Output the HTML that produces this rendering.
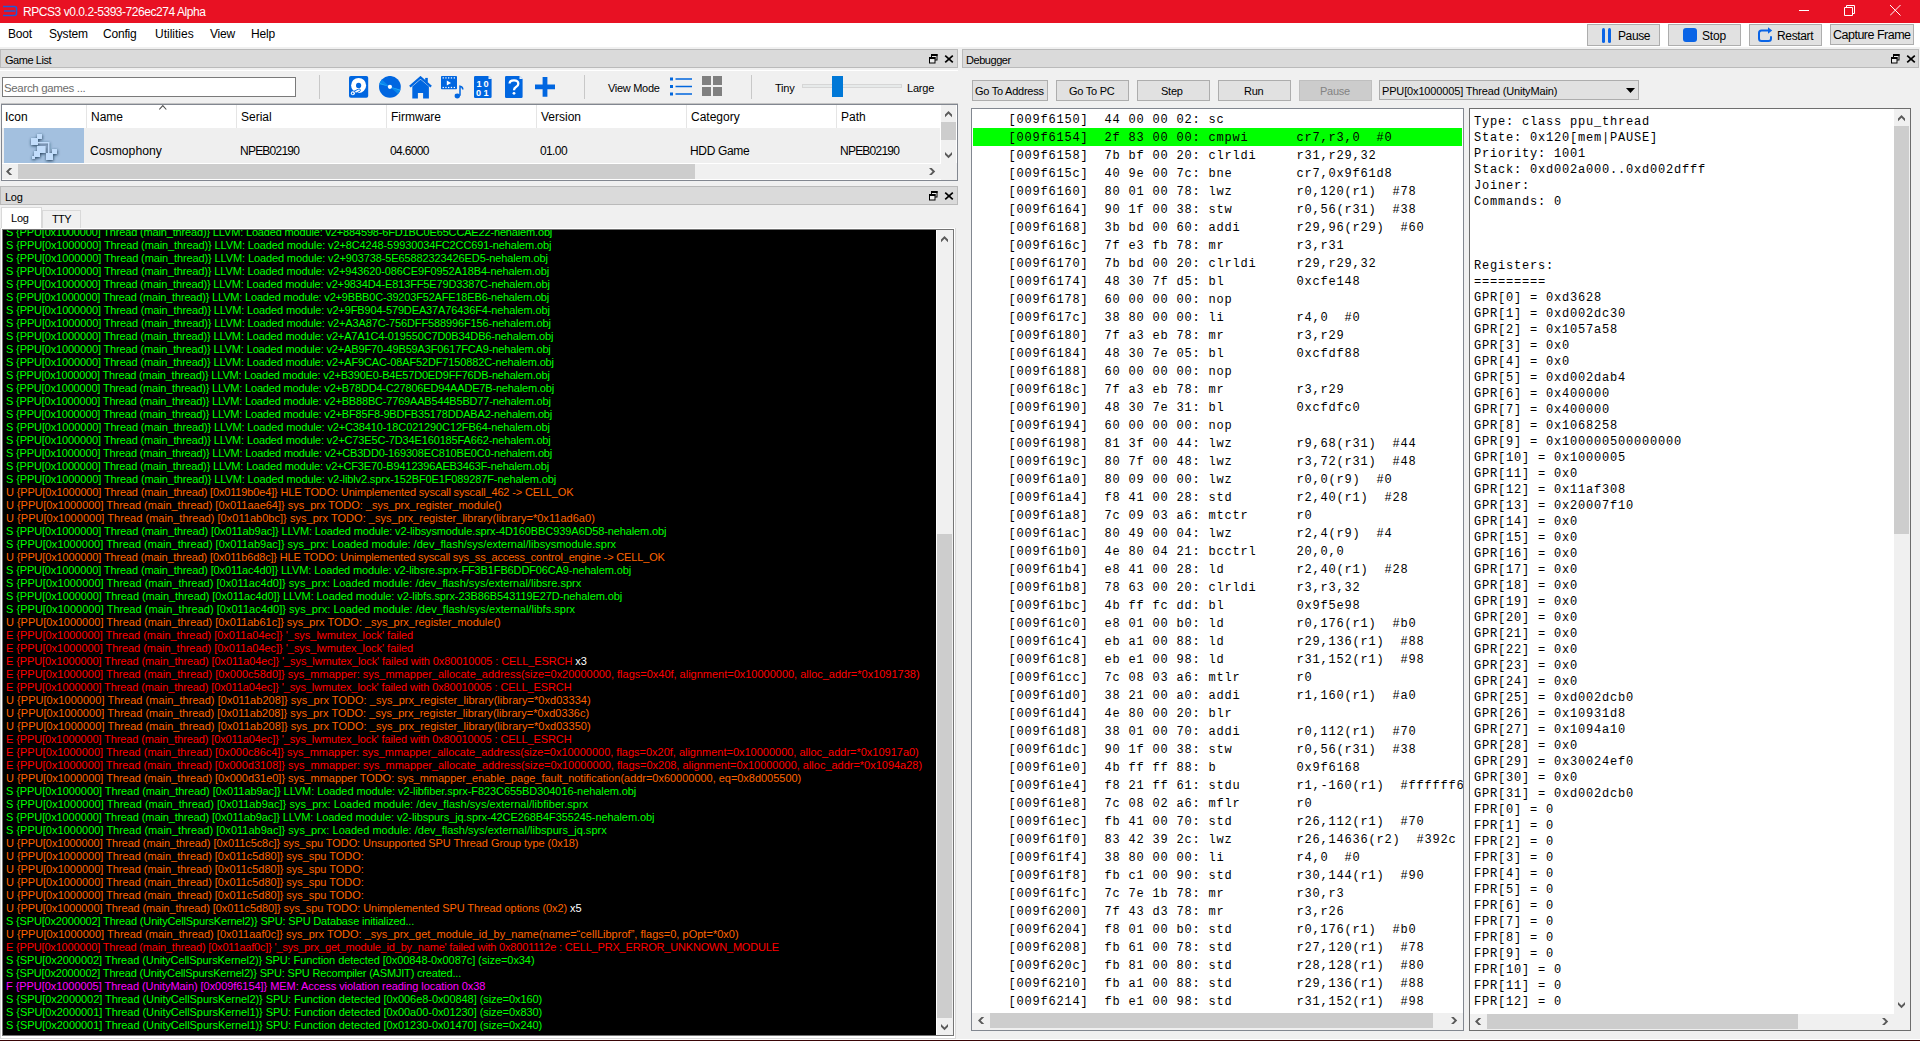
<!DOCTYPE html>
<html><head><meta charset="utf-8">
<style>
*{box-sizing:border-box;margin:0;padding:0}
html,body{width:1920px;height:1041px;overflow:hidden;background:#f0f0f0;font-family:"Liberation Sans",sans-serif;font-size:12px;color:#000}
.a{position:absolute}
.t{position:absolute;white-space:pre;line-height:1}
#title{left:0;top:0;width:1920px;height:23px;background:#e81123}
#menubar{left:0;top:23px;width:1920px;height:24px;background:#fff}
.btn{position:absolute;background:#e1e1e1;border:1px solid #adadad}
.dtitle{position:absolute;background:#dadada;border:1px solid #bababa}
.frame{position:absolute;border:1px solid #828790;background:#fff}
.mono{font-family:"Liberation Mono",monospace}
#log .l{position:absolute;left:6px;white-space:pre;font-size:11px;line-height:13px;letter-spacing:-0.125px}
.G{color:#00ff00}.U{color:#ff6400}.E{color:#ff0000}.F{color:#ff00ff}.W{color:#fff}
.dl{position:absolute;left:36.5px;white-space:pre;font-family:"Liberation Mono",monospace;font-size:12px;letter-spacing:0.8px;line-height:18px}
#reg{position:absolute;left:4px;top:5px;white-space:pre;font-family:"Liberation Mono",monospace;font-size:12px;letter-spacing:0.8px;line-height:16px}
</style></head><body>
<!-- TITLE BAR -->
<div id="title" class="a">
  <svg class="a" style="left:2px;top:4px" width="16" height="14" viewBox="0 0 16 14">
    <path d="M1 2.5H12.5Q14.5 2.5 14.5 4.5V9.5Q14.5 11.5 12.5 11.5H1M2 7H13" stroke="#1e5bd8" stroke-width="1.6" fill="none"/>
  </svg>
  <div class="t" style="left:23px;top:6px;font-size:12px;color:#fff;letter-spacing:-0.45px">RPCS3 v0.0.2-5393-726ec274 Alpha</div>
  <div class="a" style="left:1799px;top:10px;width:10px;height:1px;background:#fff"></div>
  <svg class="a" style="left:1844px;top:5px" width="11" height="11" viewBox="0 0 11 11"><path d="M0.5 2.5H8.5V10.5H0.5ZM2.5 2.5V0.5H10.5V8.5H8.5" stroke="#fff" fill="none"/></svg>
  <svg class="a" style="left:1890px;top:5px" width="11" height="11" viewBox="0 0 11 11"><path d="M0 0L10.5 10.5M10.5 0L0 10.5" stroke="#fff" fill="none"/></svg>
</div>
<!-- MENU BAR -->
<div id="menubar" class="a">
  <div class="t" style="left:8px;top:5px;letter-spacing:-0.2px">Boot</div>
  <div class="t" style="left:49px;top:5px;letter-spacing:-0.2px">System</div>
  <div class="t" style="left:103px;top:5px;letter-spacing:-0.2px">Config</div>
  <div class="t" style="left:155px;top:5px;letter-spacing:0px">Utilities</div>
  <div class="t" style="left:210px;top:5px;letter-spacing:-0.2px">View</div>
  <div class="t" style="left:251px;top:5px;letter-spacing:-0.2px">Help</div>
</div>
<!-- toolbar buttons on menubar -->
<div class="btn" style="left:1587px;top:24px;width:73px;height:22px">
  <div class="a" style="left:14px;top:3px;width:3px;height:15px;background:#0a64e6;border-radius:1.5px"></div>
  <div class="a" style="left:20px;top:3px;width:3px;height:15px;background:#0a64e6;border-radius:1.5px"></div>
  <div class="t" style="left:30px;top:5px;letter-spacing:-0.4px">Pause</div>
</div>
<div class="btn" style="left:1668px;top:24px;width:73px;height:22px">
  <div class="a" style="left:14px;top:3px;width:14px;height:14px;background:#0a64e6;border-radius:3px"></div>
  <div class="t" style="left:33px;top:5px;letter-spacing:-0.2px">Stop</div>
</div>
<div class="btn" style="left:1749px;top:24px;width:73px;height:22px">
  <svg class="a" style="left:8px;top:2px" width="16" height="16" viewBox="0 0 16 16"><path d="M10.5 3.5H3.5Q1 3.5 1 6V11.5Q1 14 3.5 14H10.5Q13 14 13 11.5V10" stroke="#0a64e6" stroke-width="2" fill="none" stroke-linecap="round"/><path d="M10 0.2L14.2 3.5L10 6.8Z" fill="#0a64e6"/></svg>
  <div class="t" style="left:27px;top:5px;letter-spacing:-0.35px">Restart</div>
</div>
<div class="btn" style="left:1830px;top:24px;width:84px;height:21px">
  <div class="t" style="left:2px;top:4px;font-size:12.5px;letter-spacing:-0.5px">Capture Frame</div>
</div>

<!-- GAME LIST DOCK -->
<div class="dtitle" style="left:0px;top:49px;width:958px;height:19px">
  <div class="t" style="left:4px;top:5px;font-size:11px;letter-spacing:-0.45px">Game List</div>
  <svg class="a" style="left:928px;top:4px" width="9" height="10" viewBox="0 0 9 10"><rect x="2.5" y="0.5" width="5.5" height="5.5" fill="#ececec" stroke="#000"/><rect x="2" y="0" width="6.5" height="2" fill="#000"/><rect x="0.5" y="3.5" width="5.5" height="5.5" fill="#ececec" stroke="#000"/><rect x="0" y="3" width="6.5" height="2" fill="#000"/></svg>
  <svg class="a" style="left:942.5px;top:4px" width="10" height="10" viewBox="0 0 10 10"><path d="M1.2 1.6L8.8 8.4M8.8 1.6L1.2 8.4" stroke="#000" stroke-width="1.7" fill="none"/></svg>
</div>
<div class="a" style="left:0;top:70px;width:958px;height:1px;background:#fff"></div>
<!-- search box -->
<div class="a" style="left:2px;top:77px;width:294px;height:20px;background:#fff;border:1px solid #7a7a7a">
  <div class="t" style="left:1px;top:5px;font-size:11.5px;color:#6d6d6d;letter-spacing:-0.35px">Search games ...</div>
</div>
<div class="a" style="left:319px;top:75px;width:1px;height:24px;background:#c8c8c8"></div>
<!-- icons -->
<svg class="a" style="left:349px;top:76px" width="20" height="22" viewBox="0 0 20 22">
  <rect x="0" y="0" width="19.2" height="21.8" rx="1.8" fill="#0066e0"/>
  <circle cx="9.6" cy="9.4" r="7.5" fill="#fff"/>
  <circle cx="9.6" cy="9.4" r="2.6" fill="#0066e0"/>
  <path d="M3.8 17.3L10 14.3" stroke="#0066e0" stroke-width="3.4" stroke-linecap="round"/>
  <path d="M3.8 17.3L10 14.3" stroke="#fff" stroke-width="1.8" stroke-linecap="round"/>
  <circle cx="3.9" cy="17.3" r="2.9" fill="#0066e0"/>
  <circle cx="3.9" cy="17.3" r="2.0" fill="#fff"/>
  <circle cx="3.7" cy="17.4" r="0.85" fill="#0066e0"/>
</svg>
<svg class="a" style="left:379px;top:76px" width="22" height="22" viewBox="0 0 22 22">
  <circle cx="10.9" cy="10.85" r="10.9" fill="#0066e0"/>
  <path d="M10.9 10.85L2.8 3.6A10.9 10.9 0 0 0 0.3 8.3Z" fill="#0a86ec"/>
  <path d="M10.9 10.85L1.0 7.0L0.5 8.0Z" fill="#20aaf6"/>
  <path d="M10.9 10.85L19 18.1A10.9 10.9 0 0 0 21.5 13.4Z" fill="#0a86ec"/>
  <path d="M10.9 10.85L20.8 14.7L21.3 13.7Z" fill="#20aaf6"/>
  <circle cx="10.9" cy="10.85" r="2.1" fill="#fff"/>
</svg>
<svg class="a" style="left:409px;top:76px" width="24" height="23" viewBox="0 0 24 23">
  <path d="M0.9 10.6L11.5 1.4L22.1 10.6" stroke="#0066e0" stroke-width="2.3" fill="none"/>
  <path d="M3.3 10.4L11.5 3.6L19.9 10.4V22.5H14.1V17.1H8.9V22.5H3.3Z" fill="#0066e0"/>
  <rect x="16.2" y="1.9" width="2.6" height="4.2" fill="#0066e0"/>
</svg>
<svg class="a" style="left:441px;top:76px" width="23" height="23" viewBox="0 0 23 23">
  <rect x="0" y="0.1" width="16" height="13.1" rx="0.8" fill="#0066e0"/>
  <g fill="#fff"><rect x="1.6" y="1.3" width="1.3" height="1.2"/><rect x="4.3" y="1.3" width="1.3" height="1.2"/><rect x="7" y="1.3" width="1.3" height="1.2"/><rect x="9.8" y="1.3" width="1.3" height="1.2"/><rect x="12.7" y="1.3" width="1.3" height="1.2"/>
  <rect x="1.6" y="10.9" width="1.3" height="1.2"/><rect x="4.3" y="10.9" width="1.3" height="1.2"/><rect x="7" y="10.9" width="1.3" height="1.2"/><rect x="9.8" y="10.9" width="1.3" height="1.2"/><rect x="12.7" y="10.9" width="1.3" height="1.2"/></g>
  <path d="M5.8 4.4V9.5L10 6.95Z" fill="#fff"/>
  <path d="M19 19.8V10.2Q21.8 10.8 21.8 13.4" stroke="#0066e0" stroke-width="1.5" fill="none"/>
  <ellipse cx="16.3" cy="20" rx="2.7" ry="2.4" fill="#0066e0"/>
</svg>
<svg class="a" style="left:474px;top:76px" width="19" height="22" viewBox="0 0 19 22">
  <path d="M1.2 0H14.5L17.6 3.1V20.8Q17.6 22 16.4 22H1.2Q0 22 0 20.8V1.2Q0 0 1.2 0Z" fill="#0066e0"/>
  <path d="M14.5 0L17.6 3.1H14.5Z" fill="#fff" opacity="0.9"/>
  <g font-family="Liberation Sans" font-size="9.2" font-weight="bold" fill="#fff">
  <text x="2.6" y="10.9">1</text><text x="9.6" y="10.9">0</text>
  <text x="2.0" y="20.1">0</text><text x="9.6" y="20.1">1</text></g>
</svg>
<svg class="a" style="left:505px;top:76px" width="19" height="22" viewBox="0 0 19 22">
  <path d="M1.2 0H14.5L17.6 3.1V20.8Q17.6 22 16.4 22H1.2Q0 22 0 20.8V1.2Q0 0 1.2 0Z" fill="#0066e0"/>
  <path d="M14.5 0L17.6 3.1H14.5Z" fill="#fff" opacity="0.9"/>
  <path d="M4.6 7.6Q4.6 4.3 9.0 4.3Q13.3 4.3 13.3 7.8Q13.3 9.8 11.0 11.0Q9.0 12.0 9.0 14.2" stroke="#fff" stroke-width="2.3" fill="none"/>
  <circle cx="9.0" cy="17.3" r="1.4" fill="#fff"/>
</svg>
<svg class="a" style="left:535px;top:77px" width="20" height="20" viewBox="0 0 20 20">
  <path d="M10 0V19.7M0 9.8H20" stroke="#0066e0" stroke-width="4.8"/>
</svg>
<div class="a" style="left:584px;top:75px;width:1px;height:24px;background:#c8c8c8"></div>
<div class="t" style="left:608px;top:83px;font-size:11px;letter-spacing:-0.3px">View Mode</div>
<svg class="a" style="left:670px;top:77px" width="23" height="20" viewBox="0 0 23 20">
  <rect x="0" y="0.5" width="3" height="3" fill="#0066dd"/><rect x="0" y="8" width="3" height="3" fill="#0066dd"/><rect x="0" y="15.5" width="3" height="3" fill="#0066dd"/>
  <path d="M5.5 2H22M5.5 9.5H22M5.5 17H22" stroke="#0066dd" stroke-width="1.6"/>
</svg>
<svg class="a" style="left:702px;top:76px" width="21" height="21" viewBox="0 0 21 21">
  <rect x="0" y="0" width="9" height="9" fill="#808080"/><rect x="11" y="0" width="9" height="9" fill="#808080"/>
  <rect x="0" y="11" width="9" height="9" fill="#808080"/><rect x="11" y="11" width="9" height="9" fill="#808080"/>
</svg>
<div class="a" style="left:751px;top:75px;width:1px;height:24px;background:#c8c8c8"></div>
<div class="t" style="left:775px;top:83px;font-size:11px;letter-spacing:-0.2px">Tiny</div>
<div class="a" style="left:802px;top:84px;width:100px;height:4px;background:#e7eaea;border:1px solid #d6d6d6"></div>
<div class="a" style="left:832px;top:76px;width:11px;height:21px;background:#0078d7"></div>
<div class="t" style="left:907px;top:83px;font-size:11px;letter-spacing:-0.2px">Large</div>
<div class="a" style="left:1px;top:103px;width:957px;height:1px;background:#c4c4c4"></div>
<!-- table -->
<div class="a" style="left:1px;top:104px;width:957px;height:77px;border:1px solid #828790;background:#fff">
  <div class="a" style="left:0;top:0;width:939px;height:23px;background:#fff"></div>
  <div class="a" style="left:84px;top:0;width:1px;height:23px;background:#e5e5e5"></div>
  <div class="a" style="left:234px;top:0;width:1px;height:23px;background:#e5e5e5"></div>
  <div class="a" style="left:384px;top:0;width:1px;height:23px;background:#e5e5e5"></div>
  <div class="a" style="left:534px;top:0;width:1px;height:23px;background:#e5e5e5"></div>
  <div class="a" style="left:684px;top:0;width:1px;height:23px;background:#e5e5e5"></div>
  <div class="a" style="left:834px;top:0;width:1px;height:23px;background:#e5e5e5"></div>
  <svg class="a" style="left:156.5px;top:0px" width="9" height="5" viewBox="0 0 9 5"><path d="M0.3 4.5L3.8 0.6L7.3 4.5" stroke="#505050" stroke-width="1.1" fill="none"/></svg>
  <div class="t" style="left:3px;top:6px">Icon</div>
  <div class="t" style="left:89px;top:6px">Name</div>
  <div class="t" style="left:239px;top:6px">Serial</div>
  <div class="t" style="left:389px;top:6px">Firmware</div>
  <div class="t" style="left:539px;top:6px">Version</div>
  <div class="t" style="left:689px;top:6px">Category</div>
  <div class="t" style="left:839px;top:6px">Path</div>
  <div class="a" style="left:0;top:23px;width:938px;height:35px;background:#efefef"></div>
  <div class="a" style="left:2px;top:23px;width:80px;height:35px;background:#a3c0df"></div>
  <svg class="a" style="left:26px;top:25px" width="34" height="34" viewBox="0 0 34 34">
    <defs><filter id="sh" x="-30%" y="-30%" width="160%" height="160%"><feDropShadow dx="0.3" dy="1" stdDeviation="1.8" flood-color="#14304f" flood-opacity="0.95"/></filter></defs>
    <g fill="#c2ddfb" filter="url(#sh)"><rect x="9" y="4" width="5" height="5"/><rect x="3" y="8" width="7" height="7"/><rect x="10" y="12" width="11.2" height="1.2"/><rect x="20" y="12" width="1.2" height="11"/><rect x="9" y="16" width="8.5" height="7"/><rect x="6" y="21" width="6" height="6"/><rect x="4" y="26" width="3" height="3"/><rect x="18" y="23" width="7" height="7"/><rect x="24" y="19" width="5" height="5"/></g>
  </svg>
  <div class="t" style="left:88px;top:40px;font-size:12.2px">Cosmophony</div>
  <div class="t" style="left:238px;top:40px;letter-spacing:-0.77px">NPEB02190</div>
  <div class="t" style="left:388px;top:40px;letter-spacing:-0.64px">04.6000</div>
  <div class="t" style="left:538px;top:40px;letter-spacing:-0.62px">01.00</div>
  <div class="t" style="left:688px;top:40px;letter-spacing:-0.35px">HDD Game</div>
  <div class="t" style="left:838px;top:40px;letter-spacing:-0.77px">NPEB02190</div>
  <!-- vscroll -->
  <div class="a" style="left:939px;top:0;width:15px;height:58px;background:#f0f0f0"></div>
    <div class="a" style="left:939px;top:17px;width:15px;height:18px;background:#cdcdcd"></div>
    <!-- hscroll -->
  <div class="a" style="left:0;top:59px;width:939px;height:15px;background:#f0f0f0"></div><div class="a" style="left:939px;top:58px;width:16px;height:17px;background:#f0f0f0"></div>
    <div class="a" style="left:16px;top:59px;width:677px;height:15px;background:#cdcdcd"></div>
  </div>
<!-- LOG DOCK -->
<div class="dtitle" style="left:0px;top:186px;width:958px;height:19px">
  <div class="t" style="left:4px;top:5px;font-size:11px;letter-spacing:-0.3px">Log</div>
  <svg class="a" style="left:928px;top:4px" width="9" height="10" viewBox="0 0 9 10"><rect x="2.5" y="0.5" width="5.5" height="5.5" fill="#ececec" stroke="#000"/><rect x="2" y="0" width="6.5" height="2" fill="#000"/><rect x="0.5" y="3.5" width="5.5" height="5.5" fill="#ececec" stroke="#000"/><rect x="0" y="3" width="6.5" height="2" fill="#000"/></svg>
  <svg class="a" style="left:942.5px;top:4px" width="10" height="10" viewBox="0 0 10 10"><path d="M1.2 1.6L8.8 8.4M8.8 1.6L1.2 8.4" stroke="#000" stroke-width="1.7" fill="none"/></svg>
</div>

<!-- LOG TABS -->
<div class="a" style="left:1px;top:207px;width:41px;height:22px;background:#fff;border:1px solid #d9d9d9;border-bottom:none"></div>
<div class="t" style="left:11px;top:213px;font-size:11px;letter-spacing:-0.2px">Log</div>
<div class="a" style="left:42px;top:210px;width:39px;height:18px;background:#f0f0f0;border:1px solid #d9d9d9;border-bottom:none"></div>
<div class="t" style="left:52px;top:214px;font-size:11px;letter-spacing:-0.6px">TTY</div>
<!-- pane -->
<div class="a" style="left:0;top:228px;width:956px;height:811px;background:#fff;border:1px solid #d9d9d9;border-top:none"></div>
<div class="a" style="left:2px;top:229px;width:952px;height:807px;border:1px solid #747474;background:#000"></div>
<div id="log" class="a" style="left:0;top:230px;width:936px;height:805px;overflow:hidden">
<div class="l G" style="top:-4px;letter-spacing:-0.159px">S {PPU[0x1000000] Thread (main_thread)} LLVM: Loaded module: v2+884598-6FD1BC0E65CCAE22-nehalem.obj</div>
<div class="l G" style="top:9px;letter-spacing:-0.117px">S {PPU[0x1000000] Thread (main_thread)} LLVM: Loaded module: v2+8C4248-59930034FC2CC691-nehalem.obj</div>
<div class="l G" style="top:22px;letter-spacing:-0.116px">S {PPU[0x1000000] Thread (main_thread)} LLVM: Loaded module: v2+903738-5E65882323426ED5-nehalem.obj</div>
<div class="l G" style="top:35px;letter-spacing:-0.123px">S {PPU[0x1000000] Thread (main_thread)} LLVM: Loaded module: v2+943620-086CE9F0952A18B4-nehalem.obj</div>
<div class="l G" style="top:48px;letter-spacing:-0.146px">S {PPU[0x1000000] Thread (main_thread)} LLVM: Loaded module: v2+9834D4-E813FF5E79D3387C-nehalem.obj</div>
<div class="l G" style="top:61px;letter-spacing:-0.178px">S {PPU[0x1000000] Thread (main_thread)} LLVM: Loaded module: v2+9BBB0C-39203F52AFE18EB6-nehalem.obj</div>
<div class="l G" style="top:74px;letter-spacing:-0.134px">S {PPU[0x1000000] Thread (main_thread)} LLVM: Loaded module: v2+9FB904-579DEA37A76436F4-nehalem.obj</div>
<div class="l G" style="top:87px;letter-spacing:-0.124px">S {PPU[0x1000000] Thread (main_thread)} LLVM: Loaded module: v2+A3A87C-756DFF588996F156-nehalem.obj</div>
<div class="l G" style="top:100px;letter-spacing:-0.142px">S {PPU[0x1000000] Thread (main_thread)} LLVM: Loaded module: v2+A7A1C4-019550C7D0B34DB6-nehalem.obj</div>
<div class="l G" style="top:113px;letter-spacing:-0.143px">S {PPU[0x1000000] Thread (main_thread)} LLVM: Loaded module: v2+AB9F70-49B59A3F0617FCA9-nehalem.obj</div>
<div class="l G" style="top:126px;letter-spacing:-0.141px">S {PPU[0x1000000] Thread (main_thread)} LLVM: Loaded module: v2+AF9CAC-08AF52DF7150882C-nehalem.obj</div>
<div class="l G" style="top:139px;letter-spacing:-0.196px">S {PPU[0x1000000] Thread (main_thread)} LLVM: Loaded module: v2+B390E0-B4E57D0ED9FF76DB-nehalem.obj</div>
<div class="l G" style="top:152px;letter-spacing:-0.178px">S {PPU[0x1000000] Thread (main_thread)} LLVM: Loaded module: v2+B78DD4-C27806ED94AADE7B-nehalem.obj</div>
<div class="l G" style="top:165px;letter-spacing:-0.18px">S {PPU[0x1000000] Thread (main_thread)} LLVM: Loaded module: v2+BB88BC-7769AAB544B5BD77-nehalem.obj</div>
<div class="l G" style="top:178px;letter-spacing:-0.178px">S {PPU[0x1000000] Thread (main_thread)} LLVM: Loaded module: v2+BF85F8-9BDFB35178DDABA2-nehalem.obj</div>
<div class="l G" style="top:191px;letter-spacing:-0.128px">S {PPU[0x1000000] Thread (main_thread)} LLVM: Loaded module: v2+C38410-18C021290C12FB64-nehalem.obj</div>
<div class="l G" style="top:204px;letter-spacing:-0.137px">S {PPU[0x1000000] Thread (main_thread)} LLVM: Loaded module: v2+C73E5C-7D34E160185FA662-nehalem.obj</div>
<div class="l G" style="top:217px;letter-spacing:-0.172px">S {PPU[0x1000000] Thread (main_thread)} LLVM: Loaded module: v2+CB3DD0-169308EC810BE0C0-nehalem.obj</div>
<div class="l G" style="top:230px;letter-spacing:-0.154px">S {PPU[0x1000000] Thread (main_thread)} LLVM: Loaded module: v2+CF3E70-B9412396AEB3463F-nehalem.obj</div>
<div class="l G" style="top:243px;letter-spacing:-0.123px">S {PPU[0x1000000] Thread (main_thread)} LLVM: Loaded module: v2-liblv2.sprx-152BF0E1F089287F-nehalem.obj</div>
<div class="l U" style="top:256px;letter-spacing:-0.156px">U {PPU[0x1000000] Thread (main_thread) [0x0119b0e4]} HLE TODO: Unimplemented syscall syscall_462 -&gt; CELL_OK</div>
<div class="l U" style="top:269px;letter-spacing:-0.02px">U {PPU[0x1000000] Thread (main_thread) [0x011aae64]} sys_prx TODO: _sys_prx_register_module()</div>
<div class="l U" style="top:282px;letter-spacing:0.034px">U {PPU[0x1000000] Thread (main_thread) [0x011ab0bc]} sys_prx TODO: _sys_prx_register_library(library=*0x11ad6a0)</div>
<div class="l G" style="top:295px;letter-spacing:-0.114px">S {PPU[0x1000000] Thread (main_thread) [0x011ab9ac]} LLVM: Loaded module: v2-libsysmodule.sprx-4D160BBC939A6D58-nehalem.obj</div>
<div class="l G" style="top:308px;letter-spacing:0.002px">S {PPU[0x1000000] Thread (main_thread) [0x011ab9ac]} sys_prx: Loaded module: /dev_flash/sys/external/libsysmodule.sprx</div>
<div class="l U" style="top:321px;letter-spacing:-0.157px">U {PPU[0x1000000] Thread (main_thread) [0x011b6d8c]} HLE TODO: Unimplemented syscall sys_ss_access_control_engine -&gt; CELL_OK</div>
<div class="l G" style="top:334px;letter-spacing:-0.125px">S {PPU[0x1000000] Thread (main_thread) [0x011ac4d0]} LLVM: Loaded module: v2-libsre.sprx-FF3B1FB6DDF06CA9-nehalem.obj</div>
<div class="l G" style="top:347px;letter-spacing:0.025px">S {PPU[0x1000000] Thread (main_thread) [0x011ac4d0]} sys_prx: Loaded module: /dev_flash/sys/external/libsre.sprx</div>
<div class="l G" style="top:360px;letter-spacing:-0.084px">S {PPU[0x1000000] Thread (main_thread) [0x011ac4d0]} LLVM: Loaded module: v2-libfs.sprx-23B86B543119E27D-nehalem.obj</div>
<div class="l G" style="top:373px;letter-spacing:0.03px">S {PPU[0x1000000] Thread (main_thread) [0x011ac4d0]} sys_prx: Loaded module: /dev_flash/sys/external/libfs.sprx</div>
<div class="l U" style="top:386px;letter-spacing:-0.024px">U {PPU[0x1000000] Thread (main_thread) [0x011ab61c]} sys_prx TODO: _sys_prx_register_module()</div>
<div class="l E" style="top:399px;letter-spacing:-0.033px">E {PPU[0x1000000] Thread (main_thread) [0x011a04ec]} &#x27;_sys_lwmutex_lock&#x27; failed</div>
<div class="l E" style="top:412px;letter-spacing:-0.033px">E {PPU[0x1000000] Thread (main_thread) [0x011a04ec]} &#x27;_sys_lwmutex_lock&#x27; failed</div>
<div class="l E" style="top:425px;letter-spacing:-0.102px">E {PPU[0x1000000] Thread (main_thread) [0x011a04ec]} &#x27;_sys_lwmutex_lock&#x27; failed with 0x80010005 : CELL_ESRCH<span class="W"> x3</span></div>
<div class="l E" style="top:438px;letter-spacing:-0.01px">E {PPU[0x1000000] Thread (main_thread) [0x000c58d0]} sys_mmapper: sys_mmapper_allocate_address(size=0x20000000, flags=0x40f, alignment=0x10000000, alloc_addr=*0x1091738)</div>
<div class="l E" style="top:451px;letter-spacing:-0.11px">E {PPU[0x1000000] Thread (main_thread) [0x011a04ec]} &#x27;_sys_lwmutex_lock&#x27; failed with 0x80010005 : CELL_ESRCH</div>
<div class="l U" style="top:464px;letter-spacing:0.039px">U {PPU[0x1000000] Thread (main_thread) [0x011ab208]} sys_prx TODO: _sys_prx_register_library(library=*0xd03334)</div>
<div class="l U" style="top:477px;letter-spacing:0.031px">U {PPU[0x1000000] Thread (main_thread) [0x011ab208]} sys_prx TODO: _sys_prx_register_library(library=*0xd0336c)</div>
<div class="l U" style="top:490px;letter-spacing:0.039px">U {PPU[0x1000000] Thread (main_thread) [0x011ab208]} sys_prx TODO: _sys_prx_register_library(library=*0xd03350)</div>
<div class="l E" style="top:503px;letter-spacing:-0.11px">E {PPU[0x1000000] Thread (main_thread) [0x011a04ec]} &#x27;_sys_lwmutex_lock&#x27; failed with 0x80010005 : CELL_ESRCH</div>
<div class="l E" style="top:516px;letter-spacing:-0.011px">E {PPU[0x1000000] Thread (main_thread) [0x000c86c4]} sys_mmapper: sys_mmapper_allocate_address(size=0x10000000, flags=0x20f, alignment=0x10000000, alloc_addr=*0x10917a0)</div>
<div class="l E" style="top:529px;letter-spacing:-0.017px">E {PPU[0x1000000] Thread (main_thread) [0x000d3108]} sys_mmapper: sys_mmapper_allocate_address(size=0x10000000, flags=0x208, alignment=0x10000000, alloc_addr=*0x1094a28)</div>
<div class="l U" style="top:542px;letter-spacing:-0.028px">U {PPU[0x1000000] Thread (main_thread) [0x000d31e0]} sys_mmapper TODO: sys_mmapper_enable_page_fault_notification(addr=0x60000000, eq=0x8d005500)</div>
<div class="l G" style="top:555px;letter-spacing:-0.074px">S {PPU[0x1000000] Thread (main_thread) [0x011ab9ac]} LLVM: Loaded module: v2-libfiber.sprx-F823C655BD304016-nehalem.obj</div>
<div class="l G" style="top:568px;letter-spacing:0.036px">S {PPU[0x1000000] Thread (main_thread) [0x011ab9ac]} sys_prx: Loaded module: /dev_flash/sys/external/libfiber.sprx</div>
<div class="l G" style="top:581px;letter-spacing:-0.089px">S {PPU[0x1000000] Thread (main_thread) [0x011ab9ac]} LLVM: Loaded module: v2-libspurs_jq.sprx-42CE268B4F355245-nehalem.obj</div>
<div class="l G" style="top:594px;letter-spacing:0.016px">S {PPU[0x1000000] Thread (main_thread) [0x011ab9ac]} sys_prx: Loaded module: /dev_flash/sys/external/libspurs_jq.sprx</div>
<div class="l U" style="top:607px;letter-spacing:-0.07px">U {PPU[0x1000000] Thread (main_thread) [0x011c5c8c]} sys_spu TODO: Unsupported SPU Thread Group type (0x18)</div>
<div class="l U" style="top:620px;letter-spacing:-0.034px">U {PPU[0x1000000] Thread (main_thread) [0x011c5d80]} sys_spu TODO:</div>
<div class="l U" style="top:633px;letter-spacing:-0.034px">U {PPU[0x1000000] Thread (main_thread) [0x011c5d80]} sys_spu TODO:</div>
<div class="l U" style="top:646px;letter-spacing:-0.034px">U {PPU[0x1000000] Thread (main_thread) [0x011c5d80]} sys_spu TODO:</div>
<div class="l U" style="top:659px;letter-spacing:-0.034px">U {PPU[0x1000000] Thread (main_thread) [0x011c5d80]} sys_spu TODO:</div>
<div class="l U" style="top:672px;letter-spacing:-0.086px">U {PPU[0x1000000] Thread (main_thread) [0x011c5d80]} sys_spu TODO: Unimplemented SPU Thread options (0x2)<span class="W"> x5</span></div>
<div class="l G" style="top:685px;letter-spacing:-0.166px">S {SPU[0x2000002] Thread (UnityCellSpursKernel2)} SPU: SPU Database initialized...</div>
<div class="l U" style="top:698px;letter-spacing:0.018px">U {PPU[0x1000000] Thread (main_thread) [0x011aaf0c]} sys_prx TODO: _sys_prx_get_module_id_by_name(name=“cellLibprof”, flags=0, pOpt=*0x0)</div>
<div class="l E" style="top:711px;letter-spacing:-0.186px">E {PPU[0x1000000] Thread (main_thread) [0x011aaf0c]} &#x27;_sys_prx_get_module_id_by_name&#x27; failed with 0x8001112e : CELL_PRX_ERROR_UNKNOWN_MODULE</div>
<div class="l G" style="top:724px;letter-spacing:-0.071px">S {SPU[0x2000002] Thread (UnityCellSpursKernel2)} SPU: Function detected [0x00848-0x0087c] (size=0x34)</div>
<div class="l G" style="top:737px;letter-spacing:-0.181px">S {SPU[0x2000002] Thread (UnityCellSpursKernel2)} SPU: SPU Recompiler (ASMJIT) created...</div>
<div class="l F" style="top:750px;letter-spacing:-0.056px">F {PPU[0x1000005] Thread (UnityMain) [0x009f6154]} MEM: Access violation reading location 0x38</div>
<div class="l G" style="top:763px;letter-spacing:-0.061px">S {SPU[0x2000002] Thread (UnityCellSpursKernel2)} SPU: Function detected [0x006e8-0x00848] (size=0x160)</div>
<div class="l G" style="top:776px;letter-spacing:-0.061px">S {SPU[0x2000001] Thread (UnityCellSpursKernel1)} SPU: Function detected [0x00a00-0x01230] (size=0x830)</div>
<div class="l G" style="top:789px;letter-spacing:-0.061px">S {SPU[0x2000001] Thread (UnityCellSpursKernel1)} SPU: Function detected [0x01230-0x01470] (size=0x240)</div>
</div>
<!-- log vscroll -->
<div class="a" style="left:936px;top:230px;width:17px;height:805px;background:#f0f0f0;border-left:1px solid #fff"></div>
<div class="a" style="left:937px;top:534px;width:15px;height:484px;background:#cdcdcd"></div>

<!-- DEBUGGER DOCK -->
<div class="dtitle" style="left:962px;top:49px;width:957px;height:19px">
  <div class="t" style="left:3px;top:5px;font-size:11px;letter-spacing:-0.45px">Debugger</div>
  <svg class="a" style="left:928px;top:4px" width="9" height="10" viewBox="0 0 9 10"><rect x="2.5" y="0.5" width="5.5" height="5.5" fill="#ececec" stroke="#000"/><rect x="2" y="0" width="6.5" height="2" fill="#000"/><rect x="0.5" y="3.5" width="5.5" height="5.5" fill="#ececec" stroke="#000"/><rect x="0" y="3" width="6.5" height="2" fill="#000"/></svg>
  <svg class="a" style="left:942.5px;top:4px" width="10" height="10" viewBox="0 0 10 10"><path d="M1.2 1.6L8.8 8.4M8.8 1.6L1.2 8.4" stroke="#000" stroke-width="1.7" fill="none"/></svg>
</div>
<div class="btn" style="left:972px;top:80px;width:76px;height:21px"><div class="t" style="left:2px;top:5px;font-size:11px;letter-spacing:-0.25px">Go To Address</div></div>
<div class="btn" style="left:1056px;top:80px;width:73px;height:21px"><div class="t" style="left:12px;top:5px;font-size:11px;letter-spacing:-0.25px">Go To PC</div></div>
<div class="btn" style="left:1137px;top:80px;width:73px;height:21px"><div class="t" style="left:23px;top:5px;font-size:11px;letter-spacing:-0.25px">Step</div></div>
<div class="btn" style="left:1218px;top:80px;width:73px;height:21px"><div class="t" style="left:25px;top:5px;font-size:11px;letter-spacing:-0.25px">Run</div></div>
<div class="btn" style="left:1299px;top:80px;width:73px;height:21px;background:#cccccc;border-color:#bfbfbf"><div class="t" style="left:20px;top:5px;font-size:11px;letter-spacing:-0.25px;color:#838383">Pause</div></div>
<div class="btn" style="left:1379px;top:80px;width:260px;height:20px">
  <div class="t" style="left:2px;top:5px;font-size:11px;letter-spacing:-0.15px">PPU[0x1000005] Thread (UnityMain)</div>
  <svg class="a" style="left:245.5px;top:7px" width="9" height="5" viewBox="0 0 9 5"><path d="M0 0H9L4.5 5Z" fill="#000"/></svg>
</div>
<!-- disasm -->
<div class="frame" style="left:971px;top:108px;width:493px;height:923px;overflow:hidden">
  <div class="a" style="left:1px;top:19px;width:489px;height:18px;background:#00ff00"></div>
<div class="dl" style="top:2px">[009f6150]  44 00 00 02: sc</div>
<div class="dl" style="top:20px">[009f6154]  2f 83 00 00: cmpwi      cr7,r3,0  #0</div>
<div class="dl" style="top:38px">[009f6158]  7b bf 00 20: clrldi     r31,r29,32</div>
<div class="dl" style="top:56px">[009f615c]  40 9e 00 7c: bne        cr7,0x9f61d8</div>
<div class="dl" style="top:74px">[009f6160]  80 01 00 78: lwz        r0,120(r1)  #78</div>
<div class="dl" style="top:92px">[009f6164]  90 1f 00 38: stw        r0,56(r31)  #38</div>
<div class="dl" style="top:110px">[009f6168]  3b bd 00 60: addi       r29,96(r29)  #60</div>
<div class="dl" style="top:128px">[009f616c]  7f e3 fb 78: mr         r3,r31</div>
<div class="dl" style="top:146px">[009f6170]  7b bd 00 20: clrldi     r29,r29,32</div>
<div class="dl" style="top:164px">[009f6174]  48 30 7f d5: bl         0xcfe148</div>
<div class="dl" style="top:182px">[009f6178]  60 00 00 00: nop</div>
<div class="dl" style="top:200px">[009f617c]  38 80 00 00: li         r4,0  #0</div>
<div class="dl" style="top:218px">[009f6180]  7f a3 eb 78: mr         r3,r29</div>
<div class="dl" style="top:236px">[009f6184]  48 30 7e 05: bl         0xcfdf88</div>
<div class="dl" style="top:254px">[009f6188]  60 00 00 00: nop</div>
<div class="dl" style="top:272px">[009f618c]  7f a3 eb 78: mr         r3,r29</div>
<div class="dl" style="top:290px">[009f6190]  48 30 7e 31: bl         0xcfdfc0</div>
<div class="dl" style="top:308px">[009f6194]  60 00 00 00: nop</div>
<div class="dl" style="top:326px">[009f6198]  81 3f 00 44: lwz        r9,68(r31)  #44</div>
<div class="dl" style="top:344px">[009f619c]  80 7f 00 48: lwz        r3,72(r31)  #48</div>
<div class="dl" style="top:362px">[009f61a0]  80 09 00 00: lwz        r0,0(r9)  #0</div>
<div class="dl" style="top:380px">[009f61a4]  f8 41 00 28: std        r2,40(r1)  #28</div>
<div class="dl" style="top:398px">[009f61a8]  7c 09 03 a6: mtctr      r0</div>
<div class="dl" style="top:416px">[009f61ac]  80 49 00 04: lwz        r2,4(r9)  #4</div>
<div class="dl" style="top:434px">[009f61b0]  4e 80 04 21: bcctrl     20,0,0</div>
<div class="dl" style="top:452px">[009f61b4]  e8 41 00 28: ld         r2,40(r1)  #28</div>
<div class="dl" style="top:470px">[009f61b8]  78 63 00 20: clrldi     r3,r3,32</div>
<div class="dl" style="top:488px">[009f61bc]  4b ff fc dd: bl         0x9f5e98</div>
<div class="dl" style="top:506px">[009f61c0]  e8 01 00 b0: ld         r0,176(r1)  #b0</div>
<div class="dl" style="top:524px">[009f61c4]  eb a1 00 88: ld         r29,136(r1)  #88</div>
<div class="dl" style="top:542px">[009f61c8]  eb e1 00 98: ld         r31,152(r1)  #98</div>
<div class="dl" style="top:560px">[009f61cc]  7c 08 03 a6: mtlr       r0</div>
<div class="dl" style="top:578px">[009f61d0]  38 21 00 a0: addi       r1,160(r1)  #a0</div>
<div class="dl" style="top:596px">[009f61d4]  4e 80 00 20: blr</div>
<div class="dl" style="top:614px">[009f61d8]  38 01 00 70: addi       r0,112(r1)  #70</div>
<div class="dl" style="top:632px">[009f61dc]  90 1f 00 38: stw        r0,56(r31)  #38</div>
<div class="dl" style="top:650px">[009f61e0]  4b ff ff 88: b          0x9f6168</div>
<div class="dl" style="top:668px">[009f61e4]  f8 21 ff 61: stdu       r1,-160(r1)  #ffffff60</div>
<div class="dl" style="top:686px">[009f61e8]  7c 08 02 a6: mflr       r0</div>
<div class="dl" style="top:704px">[009f61ec]  fb 41 00 70: std        r26,112(r1)  #70</div>
<div class="dl" style="top:722px">[009f61f0]  83 42 39 2c: lwz        r26,14636(r2)  #392c</div>
<div class="dl" style="top:740px">[009f61f4]  38 80 00 00: li         r4,0  #0</div>
<div class="dl" style="top:758px">[009f61f8]  fb c1 00 90: std        r30,144(r1)  #90</div>
<div class="dl" style="top:776px">[009f61fc]  7c 7e 1b 78: mr         r30,r3</div>
<div class="dl" style="top:794px">[009f6200]  7f 43 d3 78: mr         r3,r26</div>
<div class="dl" style="top:812px">[009f6204]  f8 01 00 b0: std        r0,176(r1)  #b0</div>
<div class="dl" style="top:830px">[009f6208]  fb 61 00 78: std        r27,120(r1)  #78</div>
<div class="dl" style="top:848px">[009f620c]  fb 81 00 80: std        r28,128(r1)  #80</div>
<div class="dl" style="top:866px">[009f6210]  fb a1 00 88: std        r29,136(r1)  #88</div>
<div class="dl" style="top:884px">[009f6214]  fb e1 00 98: std        r31,152(r1)  #98</div>
  <div class="a" style="left:0;top:904px;width:491px;height:17px;background:#f0f0f0"></div>
    <div class="a" style="left:18px;top:904px;width:443px;height:15px;background:#cdcdcd"></div>
  </div>
<!-- registers -->
<div class="frame" style="left:1469px;top:108px;width:442px;height:923px;overflow:hidden;border-color:#6e6e6e">
  <div id="reg">Type: class ppu_thread
State: 0x120[mem|PAUSE]
Priority: 1001
Stack: 0xd002a000..0xd002dfff
Joiner: 
Commands: 0



Registers:
=========
GPR[0] = 0xd3628
GPR[1] = 0xd002dc30
GPR[2] = 0x1057a58
GPR[3] = 0x0
GPR[4] = 0x0
GPR[5] = 0xd002dab4
GPR[6] = 0x400000
GPR[7] = 0x400000
GPR[8] = 0x1068258
GPR[9] = 0x100000500000000
GPR[10] = 0x1000005
GPR[11] = 0x0
GPR[12] = 0x11af308
GPR[13] = 0x20007f10
GPR[14] = 0x0
GPR[15] = 0x0
GPR[16] = 0x0
GPR[17] = 0x0
GPR[18] = 0x0
GPR[19] = 0x0
GPR[20] = 0x0
GPR[21] = 0x0
GPR[22] = 0x0
GPR[23] = 0x0
GPR[24] = 0x0
GPR[25] = 0xd002dcb0
GPR[26] = 0x10931d8
GPR[27] = 0x1094a10
GPR[28] = 0x0
GPR[29] = 0x30024ef0
GPR[30] = 0x0
GPR[31] = 0xd002dcb0
FPR[0] = 0
FPR[1] = 0
FPR[2] = 0
FPR[3] = 0
FPR[4] = 0
FPR[5] = 0
FPR[6] = 0
FPR[7] = 0
FPR[8] = 0
FPR[9] = 0
FPR[10] = 0
FPR[11] = 0
FPR[12] = 0</div>
  <div class="a" style="left:424px;top:0;width:16px;height:905px;background:#f0f0f0"></div>
    <div class="a" style="left:424px;top:17px;width:15px;height:408px;background:#cdcdcd"></div>
    <div class="a" style="left:0;top:905px;width:440px;height:16px;background:#f0f0f0"></div>
    <div class="a" style="left:17px;top:905px;width:311px;height:15px;background:#cdcdcd"></div>
  </div>

<!-- scroll arrows -->
<svg class="a" style="left:945px;top:111px" width="7" height="7" viewBox="0 0 7 7"><path d="M3.5 0L7 3.5V6.2L3.5 2.7L0 6.2V3.5Z" fill="#5a5a5a"/></svg>
<svg class="a" style="left:945px;top:152px" width="7" height="7" viewBox="0 0 7 7"><path d="M3.5 6.2L7 2.7V0L3.5 3.5L0 0V2.7Z" fill="#5a5a5a"/></svg>
<svg class="a" style="left:6px;top:168px" width="7" height="7" viewBox="0 0 7 7"><path d="M0 3.5L3.5 0H6.2L2.7 3.5L6.2 7H3.5Z" fill="#5a5a5a"/></svg>
<svg class="a" style="left:929px;top:168px" width="7" height="7" viewBox="0 0 7 7"><path d="M6.2 3.5L2.7 0H0L3.5 3.5L0 7H2.7Z" fill="#5a5a5a"/></svg>
<svg class="a" style="left:941px;top:236px" width="7" height="7" viewBox="0 0 7 7"><path d="M3.5 0L7 3.5V6.2L3.5 2.7L0 6.2V3.5Z" fill="#5a5a5a"/></svg>
<svg class="a" style="left:941px;top:1024px" width="7" height="7" viewBox="0 0 7 7"><path d="M3.5 6.2L7 2.7V0L3.5 3.5L0 0V2.7Z" fill="#5a5a5a"/></svg>
<svg class="a" style="left:978px;top:1017px" width="7" height="7" viewBox="0 0 7 7"><path d="M0 3.5L3.5 0H6.2L2.7 3.5L6.2 7H3.5Z" fill="#5a5a5a"/></svg>
<svg class="a" style="left:1451px;top:1017px" width="7" height="7" viewBox="0 0 7 7"><path d="M6.2 3.5L2.7 0H0L3.5 3.5L0 7H2.7Z" fill="#5a5a5a"/></svg>
<svg class="a" style="left:1898px;top:115px" width="7" height="7" viewBox="0 0 7 7"><path d="M3.5 0L7 3.5V6.2L3.5 2.7L0 6.2V3.5Z" fill="#5a5a5a"/></svg>
<svg class="a" style="left:1898px;top:1002px" width="7" height="7" viewBox="0 0 7 7"><path d="M3.5 6.2L7 2.7V0L3.5 3.5L0 0V2.7Z" fill="#5a5a5a"/></svg>
<svg class="a" style="left:1475px;top:1018px" width="7" height="7" viewBox="0 0 7 7"><path d="M0 3.5L3.5 0H6.2L2.7 3.5L6.2 7H3.5Z" fill="#5a5a5a"/></svg>
<svg class="a" style="left:1882px;top:1018px" width="7" height="7" viewBox="0 0 7 7"><path d="M6.2 3.5L2.7 0H0L3.5 3.5L0 7H2.7Z" fill="#5a5a5a"/></svg>
<!-- bottom window border -->
<div class="a" style="left:0;top:1039px;width:1920px;height:1px;background:#fff"></div>
<div class="a" style="left:0;top:1040px;width:1920px;height:1px;background:#3a0608"></div>
</body></html>
